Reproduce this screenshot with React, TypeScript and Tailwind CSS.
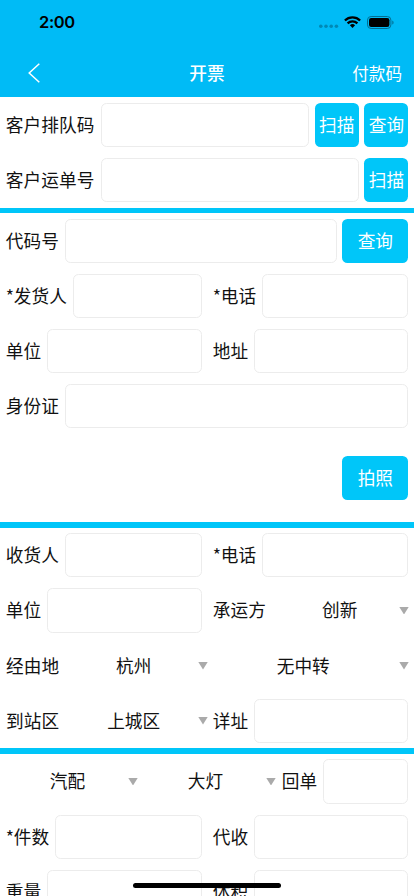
import type { ReactNode } from 'react';

const cell = 'flex h-full min-w-0 items-center pr-[5.52px] pl-[5.8px]';

function Row({ children }: { children: ReactNode }) {
  return <div className="flex h-[55.2px] w-full shrink-0 items-center">{children}</div>;
}

function Label({ children }: { children: ReactNode }) {
  return <span className="mr-[6px] shrink-0 pb-[0.6px] tracking-[0.1px] whitespace-nowrap">{children}</span>;
}

function Input() {
  return (
    <input
      type="text"
      className="h-[44.16px] w-0 min-w-0 flex-1 rounded-[5.52px] border border-[#ececec] bg-white px-2 outline-none"
    />
  );
}

function Field({ label, className = 'w-1/2 first:pr-[5px]' }: { label: string; className?: string }) {
  return (
    <div className={`${cell} ${className}`}>
      <Label>
        {label.startsWith('*') && <span className="mr-[-0.4px]">*</span>}
        {label.replace('*', '')}
      </Label>
      <Input />
    </div>
  );
}

function Button({ children, wide = false }: { children: ReactNode; wide?: boolean }) {
  return (
    <button
      className={`ml-[5.52px] h-[44.16px] shrink-0 rounded-[5.52px] bg-[#00c6f9] text-center whitespace-nowrap text-white ${
        wide ? 'w-[66.24px]' : 'w-[44.16px]'
      }`}
    >
      {children}
    </button>
  );
}

function Select({ value, pad = 'pr-[5px]' }: { value: string; pad?: string }) {
  return (
    <div className={`relative flex h-full min-w-0 flex-1 items-center justify-center ${pad}`}>
      <span className="pb-[0.6px]">{value}</span>
      <svg className="absolute top-[24px] right-[-0.5px] h-[7.5px] w-[10px]" viewBox="0 0 10 7" preserveAspectRatio="none">
        <path d="M0.3 0H9.7L5 7Z" fill="#aaaaaa" />
      </svg>
    </div>
  );
}

function Divider() {
  return <div className="h-[5.52px] w-full shrink-0 bg-[#00c6f9]" />;
}

function StatusBar() {
  return (
    <div className="flex h-[44px] items-center justify-between pr-[20.5px] pl-[39px] text-black">
      <span className="font-[Inter,sans-serif] text-[16.5px] leading-none font-semibold tracking-[-0.4px]">2:00</span>
      <div className="flex items-center">
        <svg className="h-[14px] w-[20px]" viewBox="0 0 20 14" fill="#0089b5">
          <circle cx="1.8" cy="11.3" r="1.8" />
          <circle cx="7" cy="11.3" r="1.8" />
          <circle cx="12.2" cy="11.3" r="1.8" />
          <circle cx="17.4" cy="11.3" r="1.8" />
        </svg>
        <svg className="ml-[4.5px] h-[12px] w-[17px]" viewBox="0 0 17 12" fill="none" stroke="#000" strokeWidth="2.3">
          <path d="M0.9 4.5A10.8 10.8 0 0 1 16.1 4.5" />
          <path d="M3.6 7.4A7 7 0 0 1 13.4 7.4" />
          <path d="M8.5 12L5.9 9.3A3.8 3.8 0 0 1 11.1 9.3Z" fill="#000" stroke="none" />
        </svg>
        <svg className="ml-[6px] h-[13px] w-[27px]" viewBox="0 0 27 13">
          <rect x="0.5" y="0.5" width="23.4" height="12" rx="3.6" fill="none" stroke="#006f94" />
          <rect x="2" y="2" width="20.4" height="9" rx="2.2" fill="#000" />
          <path d="M25.3 4.4C27 5 27 8 25.3 8.6Z" fill="#006f94" />
        </svg>
      </div>
    </div>
  );
}

export default function App() {
  return (
    <div className="relative flex h-[896px] w-[414px] flex-col overflow-hidden bg-white font-['Noto_Sans_CJK_SC',sans-serif] text-[17.66px] leading-none text-[#111]">
      <header className="h-[97.2px] shrink-0 bg-[#00bbf6]">
        <StatusBar />
        <nav className="grid h-[53.2px] grid-cols-3 items-center pt-[5px] text-white">
          <svg className="ml-[27.5px] h-[20px] w-[12px]" viewBox="0 0 12 20" fill="none" stroke="#fff" strokeWidth="1.5">
            <path d="M11.3 0.7L1.2 10L11.3 19.3" />
          </svg>
          <h1 className="text-center font-medium">开票</h1>
          <span className="pr-[12px] text-right text-[16.6px]">付款码</span>
        </nav>
      </header>

      <Row>
        <div className={`${cell} w-full`}>
          <Label>客户排队码</Label>
          <Input />
          <Button>扫描</Button>
          <Button>查询</Button>
        </div>
      </Row>
      <Row>
        <div className={`${cell} w-full`}>
          <Label>客户运单号</Label>
          <Input />
          <Button>扫描</Button>
        </div>
      </Row>
      <Divider />

      <Row>
        <div className={`${cell} w-full`}>
          <Label>代码号</Label>
          <Input />
          <Button wide>查询</Button>
        </div>
      </Row>
      <Row>
        <Field label="*发货人" />
        <Field label="*电话" />
      </Row>
      <Row>
        <Field label="单位" />
        <Field label="地址" />
      </Row>
      <Row>
        <Field label="身份证" className="w-full" />
      </Row>
      <div className="flex h-[88.32px] shrink-0 items-center justify-end pr-[5.52px]">
        <Button wide>拍照</Button>
      </div>
      <Divider />

      <Row>
        <Field label="收货人" />
        <Field label="*电话" />
      </Row>
      <Row>
        <Field label="单位" />
        <div className={`${cell} w-1/2`}>
          <Label>承运方</Label>
          <Select value="创新" pad="pr-px" />
        </div>
      </Row>
      <Row>
        <div className="flex h-full w-1/2 items-center pl-[6px]">
          <Label>经由地</Label>
          <Select value="杭州" />
        </div>
        <div className="flex h-full w-1/2 items-center pr-[5.52px]">
          <Select value="无中转" pad="pr-[9px]" />
        </div>
      </Row>
      <Row>
        <div className="flex h-full w-1/2 items-center pl-[6px]">
          <Label>到站区</Label>
          <Select value="上城区" />
        </div>
        <Field label="详址" />
      </Row>
      <Divider />

      <Row>
        <div className="flex h-full w-1/3">
          <Select value="汽配" pad="pr-[3px]" />
        </div>
        <div className="flex h-full w-1/3">
          <Select value="大灯" pad="pr-[3px]" />
        </div>
        <Field label="回单" className="w-1/3" />
      </Row>
      <Row>
        <Field label="*件数" />
        <Field label="代收" />
      </Row>
      <Row>
        <Field label="重量" />
        <Field label="体积" />
      </Row>

      <div className="absolute top-[882.5px] left-[133px] h-[5px] w-[148px] rounded-full bg-black" />
    </div>
  );
}
